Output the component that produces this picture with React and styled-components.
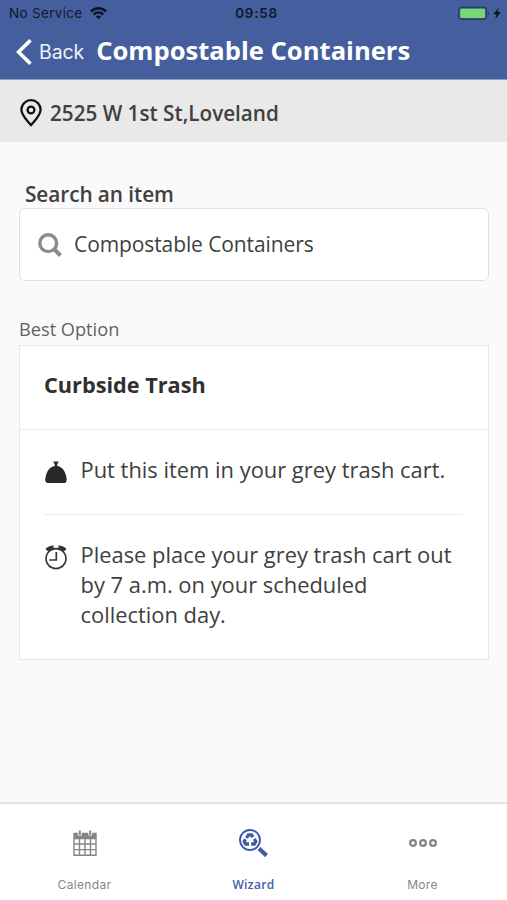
import React from 'react';
import styled, { createGlobalStyle } from 'styled-components';

const GlobalStyle = createGlobalStyle`
    * {
        box-sizing: border-box;
    }
    body {
        margin: 0;
        background: #fafafa;
        font-family: 'Open Sans', 'Noto Sans', sans-serif;
        color: #404040;
    }
`

const Screen = styled.div`
    display: flex;
    flex-direction: column;
    width: 100%;
    height: 100vh;
    overflow: hidden;
    background: #fafafa;
`

const Header = styled.header`
    height: 80px;
    flex: none;
    background: #455f9e;
    border-bottom: 1px solid #8f9dc1;
`

const StatusBar = styled.div`
    display: grid;
    grid-template-columns: 1fr auto 1fr;
    align-items: center;
    height: 27px;
    padding: 0 5px 0 9px;
    font-family: Inter, sans-serif;
    font-size: 13.5px;
    line-height: 27px;
    color: #10182c;
`

const Carrier = styled.div`
    display: flex;
    align-items: center;
    gap: 7px;
    letter-spacing: 0.32px;
`

const Time = styled.div`
    font-weight: 600;
    letter-spacing: 0.7px;
    padding-left: 2px;
`

const Battery = styled.div`
    display: flex;
    justify-content: flex-end;
`

const NavBar = styled.div`
    display: flex;
    align-items: center;
    height: 48px;
    padding-left: 16px;
    color: #fff;
`

const Back = styled.button`
    display: flex;
    align-items: center;
    gap: 7px;
    padding: 2px 0 0;
    border: 0;
    background: none;
    color: #eef1fa;
    font-family: Inter, sans-serif;
    font-size: 19.5px;
    line-height: 24px;
    letter-spacing: -0.1px;
`

const Title = styled.h1`
    margin: 0 0 1px 12px;
    font-size: 25.6px;
    line-height: 34px;
    font-weight: 700;
    white-space: nowrap;
`

const Address = styled.div`
    display: flex;
    align-items: center;
    flex: none;
    gap: 8px;
    height: 62px;
    padding: 4px 0 0 20px;
    background: #e9e9e9;
    font-size: 20.7px;
    font-weight: 600;
    white-space: nowrap;
`

const Content = styled.main`
    flex: 1;
    padding: 38px 18px 0 19px;
`

const Label = styled.label`
    display: block;
    padding-left: 6px;
    font-size: 20.8px;
    line-height: 28px;
    font-weight: 600;
    letter-spacing: -0.08px;
`

const SearchBox = styled.div`
    display: flex;
    align-items: center;
    gap: 12px;
    height: 73px;
    padding-left: 18px;
    border: 1px solid #e0e0e0;
    border-radius: 6px;
    background: #fff;
    font-size: 21px;
    letter-spacing: -0.1px;

    span {
        padding-bottom: 2px;
    }
`

const Caption = styled.div`
    margin-top: 34px;
    margin-bottom: 2px;
    font-size: 18.2px;
    line-height: 28px;
    color: #626262;
`

const Card = styled.section`
    height: 315px;
    border: 1px solid #e8e8e8;
    background: #fff;
`

const CardTitle = styled.h2`
    height: 84px;
    margin: 0;
    padding-left: 24px;
    border-bottom: 1px solid #ebebeb;
    font-size: 21.7px;
    line-height: 77px;
    font-weight: 700;
    color: #303030;
`

const Step = styled.div`
    display: flex;
    gap: 12.5px;
    margin: 0 25px 0 24px;
    padding: 25px 0 29px;
    border-bottom: ${props => props.last ? 'none' : '1px solid #ececec'};
    font-size: 21.9px;
    line-height: 30px;

    svg {
        flex: none;
        margin-top: 5px;
    }
`

const TabBar = styled.nav`
    display: grid;
    grid-template-columns: repeat(3, 1fr);
    flex: none;
    height: 98px;
    border-top: 2px solid #e2e2e2;
    background: #fff;
`

const Tab = styled.div`
    display: flex;
    flex-direction: column;
    align-items: center;
    padding-top: 25px;
    font-family: ${props => props.active ? "'Open Sans', sans-serif" : 'Inter, sans-serif'};
    font-size: 12px;
    line-height: 16px;
    font-weight: ${props => props.active ? 600 : 400};
    letter-spacing: 0.35px;
    color: ${props => props.active ? '#4460a5' : '#858585'};

    svg {
        margin-bottom: 20px;
    }
`

const WifiIcon = () => (
    <svg width="17" height="13" viewBox="0 0 17 13" fill="none" stroke="#0c1324" strokeWidth="2.5">
        <path d="M1 4.5c4.2-4.2 10.8-4.2 15 0M3.8 7.5c2.7-2.7 6.7-2.7 9.4 0" />
        <path d="M8.5 12.3 5.8 9.6c1.6-1.4 3.8-1.4 5.4 0z" fill="#0c1324" stroke="none" />
    </svg>
)

const BatteryIcon = () => (
    <svg width="44" height="15" viewBox="0 0 44 15">
        <rect x="0.8" y="1.3" width="27.6" height="12" rx="3" fill="none" stroke="#293f67" strokeWidth="1.4" />
        <rect x="2.2" y="2.7" width="24.8" height="9.4" rx="1.3" fill="#78d775" />
        <path d="M30 5.3c1.6.7 1.6 3.3 0 4z" fill="#293f67" />
        <path d="M40.8 1.8 35.3 8.3h3.3l-1.4 4.9L43 6h-3.4z" fill="#0c1324" />
    </svg>
)

const ChevronIcon = () => (
    <svg width="16" height="26" viewBox="0 0 16 26" fill="none" stroke="#fff" strokeWidth="3.6">
        <path d="M14.5 1.2 2.5 13l12 11.8" />
    </svg>
)

const PinIcon = () => (
    <svg width="22" height="28" viewBox="0 0 22 28" fill="none" stroke="#111" strokeWidth="2.3">
        <path d="M11 26.2C8.5 22.6 1.4 17.2 1.4 10.6a9.6 9.4 0 0 1 19.2 0c0 6.6-7.1 12-9.6 15.6z" strokeLinejoin="round" />
        <circle cx="11" cy="11" r="3.4" />
    </svg>
)

const SearchIcon = () => (
    <svg width="24" height="24" viewBox="0 0 24 24" fill="none" stroke="#8b8b8b">
        <circle cx="10.2" cy="10.2" r="8.4" strokeWidth="3.4" />
        <path d="m16 16 6.5 6.5" strokeWidth="4" />
    </svg>
)

const BagIcon = () => (
    <svg width="24" height="24" viewBox="0 0 24 24" fill="#292929">
        <path d="M9.2 1.6h5.6L13.2 4.4v1.5c4.600.5 7.700 4.600 8.800 9.600.7 2.800 1.200 5.200-.3 7-.4.4-1 .5-1.600.5H3.700c-.7 0-1.300-.1-1.700-.7-1.300-2-.8-4.200 0-6.800C3.100 10.600 6 6.600 10.800 5.900V4.400z" />
    </svg>
)

const AlarmIcon = () => (
    <svg width="24" height="25" viewBox="0 0 24 25" fill="none" stroke="#363636" strokeWidth="1.6">
        <circle cx="12" cy="13.6" r="10" />
        <path d="M12.3 7v8H5.2" strokeWidth="1.7" />
        <path d="M2.800 5.200C4.300 3.600 6.500 2.600 9.600 2.400M21.200 5.200C19.700 3.600 17.500 2.600 14.400 2.400" strokeWidth="3.800" />
    </svg>
)

const CalendarIcon = () => (
    <svg width="24" height="28" viewBox="0 0 24 28" fill="none" stroke="#858585" strokeWidth="1.4">
        <path d="M1 9.5h22V26.3H1zM1 15h22M1 20.6h22M6.5 9.5v17M12 9.5v17M17.5 9.5v17" />
        <path d="M1 4.4h22v3.8H1z" fill="#858585" />
        <path d="M6.8 2.5v4M17.2 2.5v4" stroke="#fff" strokeWidth="3.8" />
        <path d="M6.8 1.5v4.6M17.2 1.5v4.6" strokeWidth="2" />
    </svg>
)

// magnifier with three recycling arrows in the lens
const WizardIcon = () => (
    <svg width="29" height="28" viewBox="0 0 29 28" fill="none" stroke="#3e5ba5">
        <circle cx="11" cy="11" r="10" strokeWidth="1.9" />
        <g strokeWidth="3.3">
            <path d="m7.5 9 2-3.2h3l1.4 2.4" />
            <path d="m15.3 9.9 1.500 2.500-1.500 2.600h-3.100" />
            <path d="M10 15H6.600l-1.400-2.400 1.300-2.300" />
        </g>
        <path d="m20 19.500 7.500 7.100" strokeWidth="4.200" />
    </svg>
)

const MoreIcon = () => (
    <svg width="28" height="28" viewBox="0 0 28 28" fill="none" stroke="#858585" strokeWidth="2.2">
        <circle cx="4" cy="14" r="2.9" />
        <circle cx="14" cy="14" r="2.9" />
        <circle cx="24" cy="14" r="2.9" />
    </svg>
)

const tabs = [
    { name: 'Calendar', icon: CalendarIcon },
    { name: 'Wizard', icon: WizardIcon, active: true },
    { name: 'More', icon: MoreIcon },
];

const App = () => {
    return (
        <Screen>
            <GlobalStyle />
            <Header>
                <StatusBar>
                    <Carrier>No Service <WifiIcon /></Carrier>
                    <Time>09:58</Time>
                    <Battery><BatteryIcon /></Battery>
                </StatusBar>
                <NavBar>
                    <Back><ChevronIcon /> Back</Back>
                    <Title>Compostable Containers</Title>
                </NavBar>
            </Header>

            <Address><PinIcon /> 2525 W 1st St,Loveland</Address>

            <Content>
                <Label>Search an item</Label>
                <SearchBox>
                    <SearchIcon />
                    <span>Compostable Containers</span>
                </SearchBox>

                <Caption>Best Option</Caption>
                <Card>
                    <CardTitle>Curbside Trash</CardTitle>
                    <Step>
                        <BagIcon />
                        <span>Put this item in your grey trash cart.</span>
                    </Step>
                    <Step last>
                        <AlarmIcon />
                        <span>Please place your grey trash cart out by 7 a.m. on your scheduled collection day.</span>
                    </Step>
                </Card>
            </Content>

            <TabBar>
                {tabs.map(({ name, icon: Icon, active }) => (
                    <Tab key={name} active={active}>
                        <Icon />
                        {name}
                    </Tab>
                ))}
            </TabBar>
        </Screen>
    )
}

export default App;
